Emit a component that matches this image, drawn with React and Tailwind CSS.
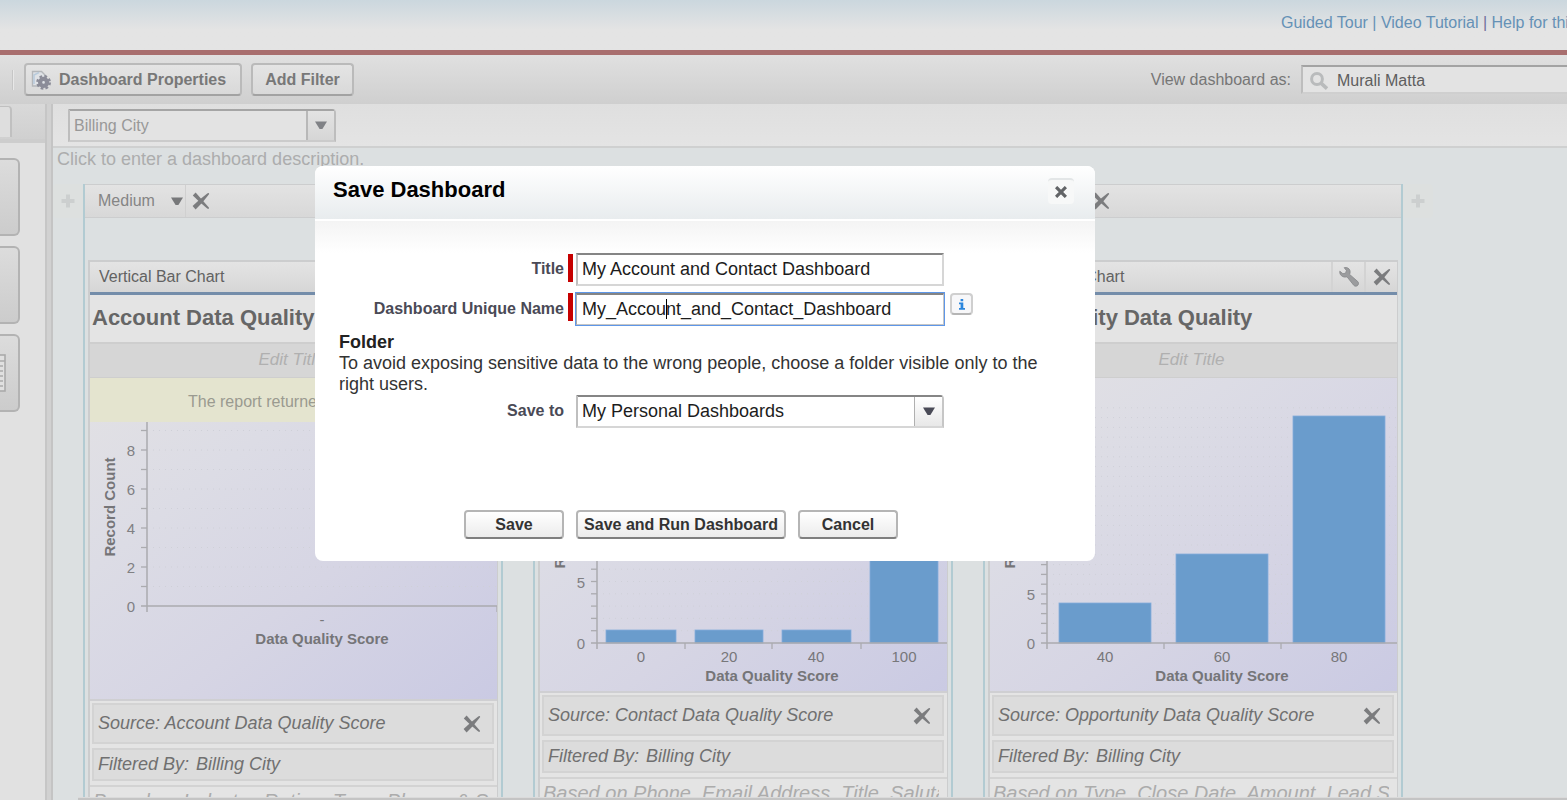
import { useState } from 'react';

function CrossIcon() {
  return (
    <svg width="18" height="18" viewBox="0 0 18 18" fill="#7b7c7e">
      <path d="M0.8 3.4 3.6 0.6 9.8 7.4 17 15.8 16.6 17 15.2 16.4 7.6 10Z" />
      <path d="M0.6 14 3.6 17.4 10.4 10.4 17.2 2 16.8 1 15.6 1.2 7.4 7.8Z" />
    </svg>
  );
}

function WrenchIcon() {
  return (
    <svg width="20" height="20" viewBox="0 0 20 20" fill="#9b9c9e" stroke="#858789" strokeWidth="0.8">
      <path d="M5.2 0.7C7.4 0 10.4 1 11 3.8 11.3 5.3 11 6.6 10.6 7.4L18.8 14.6C20 15.9 19.6 17.8 18.4 18.7 17.2 19.5 15.6 19.3 14.7 18.2L8 9.8C6.4 10.4 3.9 10.2 2.3 8.6 0.9 7.2 0.6 5.6 0.8 4.2L3.9 6.7 6.6 6.2 7.4 3.4Z" />
    </svg>
  );
}

function PageGearIcon() {
  return (
    <svg width="20" height="20" viewBox="0 0 20 20" fill="none">
      <path d="M1.5 1.5h9l4 4v10.5h-13z" fill="#dfe2e6" stroke="#b4b7ba" strokeWidth="1.4" />
      <path d="M3 14V5l5-2.5" stroke="#b9cbdc" strokeWidth="1.6" />
      <circle cx="12.6" cy="12.4" r="3.5" stroke="#8b8c98" strokeWidth="4.2" />
      <circle cx="12.6" cy="12.4" r="6.2" stroke="#8b8c98" strokeWidth="2.4" strokeDasharray="2.7 2.17" />
    </svg>
  );
}

function SearchIcon() {
  return (
    <svg className="shrink-0" width="20" height="20" viewBox="0 0 20 20" fill="none" stroke="#b9bbbc">
      <circle cx="8" cy="8" r="5.4" strokeWidth="3" />
      <path d="M12 12.2 18 17.6" strokeWidth="3.6" />
    </svg>
  );
}

function ArrowIcon({ color }) {
  return (
    <svg width="12" height="9" viewBox="0 0 12 9">
      <path d="M0 0.5h12L7.4 8H4.6z" fill={color} />
    </svg>
  );
}

function AddColumn() {
  return (
    <button aria-label="Add column" className="flex h-[34px] w-[30px] shrink-0 items-center justify-center rounded bg-[#dde0df]">
      <svg width="14" height="14" viewBox="0 0 14 14" fill="#cccfcf">
        <path d="M5 0.5h4v4.5h4.5v4H9v4.5H5V9H0.5V5H5z" />
      </svg>
    </button>
  );
}

const columns = [
  {
    title: 'Account Data Quality',
    source: 'Account Data Quality Score',
    basedOn: 'Based on Industry, Rating, Type, Phone, & Shipping',
    height: 321,
    labelY: 129,
    empty: true,
    axis: { x: 57, y: 228, top: 44, step: 19.5, ticks: 9, every: 2, max: 8 },
    centerX: 232,
    categories: [{ label: '-', x: 232 }],
    dividers: [407],
    bars: [],
  },
  {
    title: 'Contact Data Quality',
    source: 'Contact Data Quality Score',
    basedOn: 'Based on Phone, Email Address, Title, Salutation',
    height: 313,
    labelY: 141,
    axis: { x: 57, y: 265, top: 28, step: 12.3, ticks: 19, every: 5, max: 15 },
    centerX: 232,
    categories: [
      { label: '0', x: 101 },
      { label: '20', x: 189 },
      { label: '40', x: 276 },
      { label: '100', x: 364 },
    ],
    dividers: [145, 232, 321],
    bars: [
      { x: 66, w: 70, h: 13 },
      { x: 155, w: 68, h: 13 },
      { x: 242, w: 69, h: 13 },
      { x: 330, w: 68, h: 160 },
    ],
  },
  {
    title: 'Opportunity Data Quality',
    source: 'Opportunity Data Quality Score',
    basedOn: 'Based on Type, Close Date, Amount, Lead Source',
    height: 313,
    labelY: 141,
    axis: { x: 57, y: 265, top: 28, step: 9.8, ticks: 24, every: 5, max: 20 },
    centerX: 232,
    categories: [
      { label: '40', x: 115 },
      { label: '60', x: 232 },
      { label: '80', x: 349 },
    ],
    dividers: [174, 291],
    bars: [
      { x: 69, w: 92, h: 40 },
      { x: 186, w: 92, h: 89 },
      { x: 303, w: 92, h: 227 },
    ],
  },
];

function BarChart({ chart, id }) {
  const { axis, height, bars } = chart;
  const ticks = Array.from({ length: axis.ticks }, (_, i) => i + 1);
  const labels = [];
  for (let v = 0; v <= axis.max; v += axis.every) labels.push(v);

  return (
    <svg className="block w-full" viewBox={`0 0 407 ${height}`} fontFamily="Liberation Sans, Arial, sans-serif" fontSize="15">
      <defs>
        <linearGradient id={id} x1="0" y1="0" x2="1" y2="1">
          <stop offset="0" stopColor="#e2e1e4" />
          <stop offset="0.3" stopColor="#dcdce5" />
          <stop offset="0.6" stopColor="#d6d5e4" />
          <stop offset="1" stopColor="#cacae3" />
        </linearGradient>
      </defs>
      <rect width="407" height={height} fill={`url(#${id})`} />
      {chart.empty && (
        <>
          <rect width="407" height="44" fill="#e4e4cf" />
          <text x="98" y="29" fontSize="16" fill="#9a9a90">The report returned no data.</text>
        </>
      )}
      {ticks.map((t) => (
        <path key={t} d={`M${axis.x + 6} ${axis.y - t * axis.step}H407`} stroke="#cfd0d8" strokeDasharray="1 5" />
      ))}
      {bars.map((bar) => (
        <rect key={bar.x} x={bar.x} y={axis.y - bar.h} width={bar.w} height={bar.h} fill="#6a9ccc" stroke="#85addb" strokeWidth="0.8" />
      ))}
      <path d={`M${axis.x - 6} ${axis.y}H407M${axis.x} ${axis.top}V${axis.y + 6}`} stroke="#ababaf" strokeWidth="1.5" fill="none" />
      {ticks.map((t) => (
        <path key={t} d={`M${axis.x - 6} ${axis.y - t * axis.step}h6`} stroke="#ababaf" strokeWidth="1.3" />
      ))}
      {chart.dividers.map((x) => (
        <path key={x} d={`M${x} ${axis.y}v6`} stroke="#ababaf" strokeWidth="1.3" />
      ))}
      {labels.map((v) => (
        <text key={v} x={axis.x - 12} y={axis.y - v * axis.step + 6} textAnchor="end" fill="#808083">{v}</text>
      ))}
      {chart.categories.map((c) => (
        <text key={c.label} x={c.x} y={axis.y + 19} textAnchor="middle" fill="#77777a">{c.label}</text>
      ))}
      <text x={chart.centerX} y={axis.y + 38} textAnchor="middle" fontWeight="bold" fill="#757578">Data Quality Score</text>
      <text transform={`translate(25 ${chart.labelY}) rotate(-90)`} textAnchor="middle" fontWeight="bold" fill="#757578">Record Count</text>
    </svg>
  );
}

function Column({ chart, id }) {
  return (
    <section className="w-[420px] shrink-0 border-x-2 border-[#b2cbd2]">
      <div className="flex h-[34px] items-center border-y border-[#cccdce] bg-linear-to-b from-[#e3e3e3] to-[#d8d8d8] text-[16px] text-[#858585]">
        <button className="flex h-full w-[101px] items-center justify-between border-r border-[#d0d0d0] pr-0.5 pl-[13px]">
          Medium
          <ArrowIcon color="#77787a" />
        </button>
        <button aria-label="Remove column" className="ml-1.5">
          <CrossIcon />
        </button>
      </div>

      <article className="mx-[3px] mt-[42px] border-t-2 border-r border-l-2 border-[#cccdce] bg-[#e4e4e4]">
        <div className="flex h-[33px] items-stretch border-b-3 border-[#748daa] bg-linear-to-b from-[#e4e4e4] to-[#d6d6d6]">
          <span className="flex-1 self-center pl-[9px] text-[16px] text-[#626262]">Vertical Bar Chart</span>
          <button aria-label="Edit component" className="flex w-[33px] items-center justify-center border-l-2 border-[#d3d3d3]">
            <WrenchIcon />
          </button>
          <button aria-label="Remove component" className="flex w-[33px] items-center justify-center border-l-2 border-[#d3d3d3]">
            <CrossIcon />
          </button>
        </div>
        <h2 className="h-[47px] pl-0.5 text-[22px] leading-[45px] font-bold text-[#666]">{chart.title}</h2>
        <div className="h-9 border-t-2 border-b border-[#cecece] bg-[#d6d6d6] pr-1 text-center text-[17px] leading-[31px] text-[#b0b0b0] italic">Edit Title</div>
        <BarChart chart={chart} id={id} />
        <div className="flex flex-col gap-1 border-t-2 border-[#cfcfd2] py-0.5 pr-[3px] pl-0.5 text-[18px] text-[#707070] italic">
          <div className="flex h-[41px] items-center justify-between border-2 border-[#d3d3d3] bg-[#dcdcdc] pr-[11px] pl-1">
            <span>Source: {chart.source}</span>
            <button aria-label="Remove source">
              <CrossIcon />
            </button>
          </div>
          <div className="flex h-[33px] items-center gap-[7px] border-2 border-[#d3d3d3] bg-[#dcdcdc] pl-1">
            <span>Filtered By:</span>
            <span>Billing City</span>
          </div>
        </div>
        <div className="mt-0.5 border-t-2 border-[#d3d3d3] pt-0.5 pr-2 pl-[3px]">
          <p className="overflow-hidden text-[20px] leading-6 whitespace-nowrap text-[#acacac] italic">{chart.basedOn}</p>
        </div>
      </article>
    </section>
  );
}

function Toolbar() {
  const button = 'flex h-[33px] items-center rounded-[4px] border-2 border-[#bababa] border-b-[#a2a2a2] bg-linear-to-b from-[#e4e4e4] to-[#d9d9d9] text-[16px] font-bold text-[#787878]';
  return (
    <div className="flex h-[49px] shrink-0 items-center bg-linear-to-b from-[#e0e0e0] to-[#cfcfcf]">
      <div className="ml-3 h-5 w-0.5 border-l border-[#c6c6c6] bg-[#e8e8e8]" />
      <div className="ml-2.5 flex gap-[9px]">
        <button className={`${button} w-[218px] gap-2 pl-[5px]`}>
          <PageGearIcon />
          Dashboard Properties
        </button>
        <button className={`${button} w-[103px] justify-center`}>Add Filter</button>
      </div>
      <label htmlFor="viewAs" className="ml-auto pr-2.5 text-[16px] text-[#767676]">
        View dashboard as:
      </label>
      <div className="flex h-[29px] w-[266px] shrink-0 items-center border-t-2 border-b-2 border-l-2 border-t-[#a3a3a3] border-b-[#cfcfcf] border-l-[#bdbdbd] bg-[#e3e3e3] pt-0.5 pl-1.5">
        <SearchIcon />
        <input id="viewAs" defaultValue="Murali Matta" className="w-full bg-transparent pl-2 text-[16px] text-[#5e5e5e] outline-none" />
      </div>
    </div>
  );
}

function Sidebar() {
  const tile = 'h-[78px] w-5 rounded-r-md border-2 border-l-0 border-[#b3b3b3] bg-linear-to-b from-[#dcdcdc] to-[#cccccc]';
  return (
    <aside className="flex w-[53px] shrink-0 border-r-2 border-[#c4c4c4] bg-[#d1d1d1]">
      <div className="mr-1 flex w-full flex-col border-r-2 border-[#c6c6c6] bg-[#e1e1e1]">
        <div className="h-[39px] border-b-4 border-[#cdcdcd] bg-linear-to-b from-[#d9d9d9] to-[#d0d0d0] pt-0.5">
          <div className="h-[31px] w-3 rounded-tr border-t border-r-2 border-[#c0c0c0] bg-[#dedede]" />
        </div>
        <div className="mt-[15px] flex flex-col gap-[10px]">
          <button aria-label="Chart" className={tile} />
          <button aria-label="Metric" className={tile} />
          <button aria-label="Table" className={tile}>
            <svg width="6" height="38" viewBox="0 0 6 38" stroke="#aaa" strokeWidth="1.6">
              <rect x="-5" y="1" width="10" height="36" fill="#e0e0e0" />
              <path d="M0 7h5M0 12h3M0 17h3M0 22h3M0 27h3M0 32h3" />
            </svg>
          </button>
        </div>
      </div>
    </aside>
  );
}

function SaveDialog() {
  const [title, setTitle] = useState('My Account and Contact Dashboard');
  const [uniqueName, setUniqueName] = useState('My_Account_and_Contact_Dashboard');

  const label = 'w-[249px] text-right text-[16px] leading-8 font-bold text-[#4a4a56]';
  const button = 'h-[29px] rounded-[4px] border-2 border-[#b5b5b5] border-b-[#7f7f7f] bg-linear-to-b from-white to-[#ececec] text-[16px] font-bold text-[#333]';

  return (
    <div role="dialog" aria-labelledby="dialogTitle" className="absolute top-[166px] left-[315px] h-[395px] w-[780px] overflow-hidden rounded-lg bg-white">
      <header className="flex h-[55px] items-start justify-between border-b-2 border-white bg-linear-to-b from-white to-[#e8ecee] pr-[21px] pl-[18px]">
        <h1 id="dialogTitle" className="text-[22px] leading-12 font-bold text-black">Save Dashboard</h1>
        <button aria-label="Close" className="mt-3 flex h-[26px] w-[26px] items-center justify-center rounded border-t-2 border-[#e3e6e7] bg-[#f7f8f8]">
          <svg width="12" height="12" viewBox="0 0 12 12" stroke="#626467" strokeWidth="3.2" strokeLinecap="square">
            <path d="M2.2 2.2 9.8 9.8M9.8 2.2 2.2 9.8" />
          </svg>
        </button>
      </header>
      <form className="bg-linear-to-b from-[#f4f4f4] to-white bg-[length:100%_32px] bg-no-repeat pt-8">
        <div className="flex items-start">
          <label htmlFor="title" className={label}>Title</label>
          <div className="mt-px ml-1 h-7 w-[5px] bg-[#c60000]" />
          <input
            id="title"
            value={title}
            onChange={(e) => setTitle(e.target.value)}
            className="ml-[3px] h-[33px] w-[368px] border-2 border-t-[#858585] border-r-[#d6d6d6] border-b-[#d6d6d6] border-l-[#bfbfbf] pl-1 text-[18px] text-[#1c1c1c] outline-none"
          />
        </div>
        <div className="mt-[7px] flex items-start">
          <label htmlFor="uniqueName" className={label}>Dashboard Unique Name</label>
          <div className="ml-1 h-7 w-[5px] bg-[#c60000]" />
          <div className="relative ml-[3px]">
            <input
              id="uniqueName"
              value={uniqueName}
              onChange={(e) => setUniqueName(e.target.value)}
              className="block h-8 w-[368px] border border-t-2 border-t-[#858585] border-r-[#c6c6c6] border-b-[#c6c6c6] border-l-[#a8a8a8] pl-[5px] text-[18px] text-[#1c1c1c] ring-1 ring-[#5e97e8] outline-none"
            />
            <span className="absolute top-1.5 left-[90px] h-5 w-px bg-black" />
          </div>
          <button type="button" aria-label="Info" className="ml-1.5 flex h-[22px] w-[23px] items-center justify-center rounded border-2 border-[#cfcfcf] border-b-[#b5b5b5] bg-[#f7f7f9]">
            <svg width="8" height="11" viewBox="0 0 8 11" fill="#2b86dd">
              <path d="M2.6 0h2.6v2.2H2.6zM1 3.6h4.3v5.4H7v1.7H1V9h1.6V5.2H1z" />
            </svg>
          </button>
        </div>
        <div className="mt-[7px] pr-10 pl-6 text-[18px] leading-[21px] text-[#333]">
          <h2 className="font-bold text-[#222]">Folder</h2>
          <p>To avoid exposing sensitive data to the wrong people, choose a folder visible only to the right users.</p>
        </div>
        <div className="flex items-start gap-3">
          <label htmlFor="saveTo" className={label}>Save to</label>
          <div className="relative">
            <select id="saveTo" className="block h-[33px] w-[368px] appearance-none rounded-tr border-2 border-t-[#858585] border-r-[#c6c6c6] border-b-[#d6d6d6] border-l-[#bfbfbf] bg-white pl-1 text-[18px] text-[#1c1c1c]">
              <option>My Personal Dashboards</option>
            </select>
            <span className="pointer-events-none absolute top-0.5 right-0.5 flex h-[29px] w-7 items-center justify-center border-l border-[#b0b0b0] bg-linear-to-b from-white to-[#e8e8e8]">
              <ArrowIcon color="#4a4b57" />
            </span>
          </div>
        </div>
        <div className="mt-[82px] ml-[149px] flex gap-3">
          <button type="button" className={`${button} w-[100px]`}>Save</button>
          <button type="button" className={`${button} w-[210px]`}>Save and Run Dashboard</button>
          <button type="button" className={`${button} w-[100px]`}>Cancel</button>
        </div>
      </form>
    </div>
  );
}

export default function App() {
  return (
    <div className="relative flex h-screen flex-col overflow-hidden bg-[#dce0e1] font-['Liberation_Sans',Arial,sans-serif]">
      <header className="flex h-[55px] shrink-0 justify-end border-b-5 border-[#a86e6e] bg-[#e4e4e4] bg-linear-to-b from-[#cbd7de] to-[#e4e4e4] to-60%">
        <nav className="w-[286px] overflow-hidden text-[16px] leading-[45px] whitespace-nowrap text-[#6591b6]">
          <a href="#tour">Guided Tour</a> | <a href="#video">Video Tutorial</a> <span className="text-[#71719a]">|</span> <a href="#help">Help for this Page</a>
        </nav>
      </header>
      <Toolbar />
      <div className="flex min-h-0 flex-1">
        <Sidebar />
        <main className="flex min-w-0 flex-1 flex-col">
          <div className="h-11 shrink-0 border-b-2 border-[#cfd0d0] bg-linear-to-b from-[#dfdfdf] to-[#e4e4e4] pt-[5px] pl-[15px]">
            <div className="relative w-[268px]">
              <select aria-label="Dashboard filter" className="block h-[33px] w-full appearance-none rounded-tr border-2 border-t-[#a5a5a5] border-r-[#bdbdbd] border-b-[#cbcbcb] border-l-[#bdbdbd] bg-[#e3e3e3] pl-1 text-[16px] text-[#989898]">
                <option>Billing City</option>
              </select>
              <span className="pointer-events-none absolute top-0.5 right-0.5 flex h-[29px] w-7 items-center justify-center border-l-2 border-[#b8b8b8] bg-linear-to-b from-[#e3e3e3] to-[#d6d6d6]">
                <ArrowIcon color="#808286" />
              </span>
            </div>
          </div>
          <p className="h-9 shrink-0 pl-1 text-[18px] leading-[22px] text-[#acadad]">Click to enter a dashboard description.</p>
          <div className="flex min-h-0 flex-1 overflow-hidden">
            {columns.map((chart, i) => (
              <div key={chart.title} className="flex shrink-0">
                <AddColumn />
                <Column chart={chart} id={`chartFill${i}`} />
              </div>
            ))}
            <AddColumn />
          </div>
          <div className="ml-[25px] h-[3px] shrink-0 border-t border-[#dadada] bg-[#c4c4c4]" />
        </main>
      </div>
      <SaveDialog />
    </div>
  );
}
